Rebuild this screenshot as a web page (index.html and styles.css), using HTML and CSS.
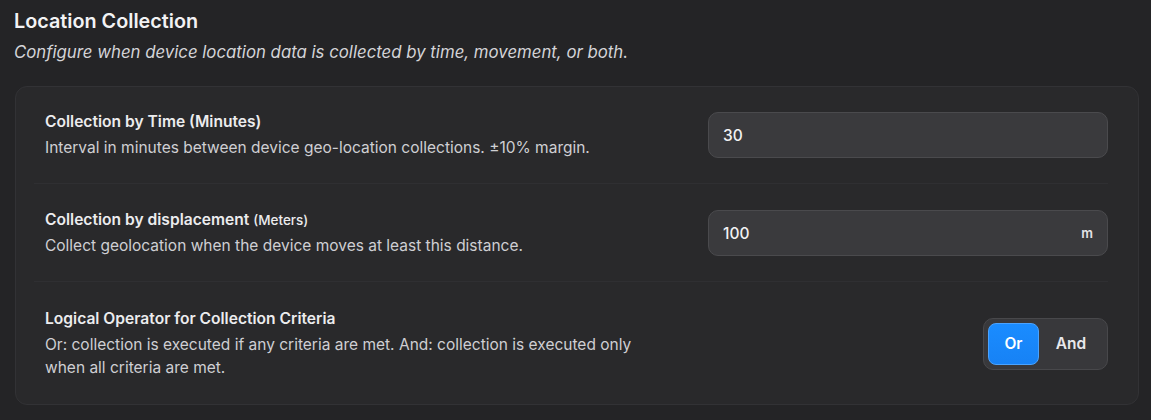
FILE: index.html
```html
<!DOCTYPE html>
<html lang="en">
<head>
    <meta charset="UTF-8">
    <meta name="viewport" content="width=device-width, initial-scale=1.0">
    <title>Location Collection</title>
    <link rel="stylesheet" href="styles.css">
</head>
<body>
    <section class="settings">
        <h2 class="section-title">Location Collection</h2>
        <p class="section-subtitle">Configure when device location data is collected by time, movement, or both.</p>

        <div class="card">
            <div class="setting-row">
                <div class="setting-text">
                    <h3>Collection by Time (Minutes)</h3>
                    <p>Interval in minutes between device geo-location collections. ±10% margin.</p>
                </div>
                <div class="field">
                    <input type="text" value="30">
                </div>
            </div>

            <div class="setting-row">
                <div class="setting-text">
                    <h3>Collection by displacement <span class="unit-label">(Meters)</span></h3>
                    <p>Collect geolocation when the device moves at least this distance.</p>
                </div>
                <div class="field">
                    <input type="text" value="100">
                    <span class="suffix">m</span>
                </div>
            </div>

            <div class="setting-row">
                <div class="setting-text">
                    <h3>Logical Operator for Collection Criteria</h3>
                    <p>Or: collection is executed if any criteria are met. And: collection is executed only when all criteria are met.</p>
                </div>
                <div class="segmented">
                    <button class="segment active">Or</button>
                    <button class="segment">And</button>
                </div>
            </div>
        </div>
    </section>
</body>
</html>
```

FILE: styles.css
```css
* {
    margin: 0;
    padding: 0;
    box-sizing: border-box;
    font-family: Inter, 'Noto Sans', sans-serif;
}

body {
    background-color: #242426;
    color: #ececee;
}

.settings {
    padding: 8px 12px 0 14px;
}

.section-title {
    font-size: 19.8px;
    font-weight: 600;
    color: #f2f2f4;
    line-height: 26px;
}

.section-subtitle {
    margin-top: 7px;
    font-size: 16.8px;
    font-style: italic;
    color: #d4d4d8;
    line-height: 22px;
}

.card {
    margin-top: 23px;
    margin-left: 1px;
    background-color: #29292b;
    border: 1px solid #323235;
    border-radius: 12px;
    padding: 0 30px 0 18px;
}

.setting-row {
    display: flex;
    justify-content: space-between;
    align-items: center;
    padding: 24px 0 24px 11px;
    border-bottom: 1px solid #2f2f32;
}

.setting-row + .setting-row {
    padding-top: 25px;
}

.setting-row:last-child {
    border-bottom: none;
    padding-top: 26px;
    padding-bottom: 25px;
}

.setting-text {
    max-width: 600px;
}

.setting-text h3 {
    font-size: 15.6px;
    font-weight: 600;
    color: #ececee;
    line-height: 22px;
}

.unit-label {
    font-size: 13.5px;
    font-weight: 500;
}

.setting-text p {
    margin-top: 3px;
    font-size: 15.5px;
    color: #cfcfd3;
    line-height: 23px;
}

.field {
    position: relative;
    width: 400px;
}

.field input {
    width: 100%;
    height: 46px;
    background-color: #3a3a3d;
    border: 1px solid #4a4a4d;
    border-radius: 10px;
    padding: 0 40px 0 14px;
    font-size: 15.5px;
    font-weight: 500;
    color: #f2f2f4;
    outline: none;
}

.suffix {
    position: absolute;
    right: 15px;
    top: 50%;
    transform: translateY(-50%);
    font-size: 13px;
    font-weight: 600;
    color: #e4e4e8;
}

.segmented {
    display: flex;
    background-color: #38383b;
    border: 1px solid #48484b;
    border-radius: 10px;
    padding: 4px;
}

.segment {
    width: 51px;
    height: 42px;
    background: none;
    border: none;
    border-radius: 8px;
    font-size: 15.5px;
    font-weight: 600;
    color: #e8e8ec;
    cursor: pointer;
}

.segment + .segment {
    width: 64px;
}

.segment.active {
    background: linear-gradient(#1a8cff, #1782f5);
    border: 1px solid #4aa3ff;
    color: #ffffff;
}
```
